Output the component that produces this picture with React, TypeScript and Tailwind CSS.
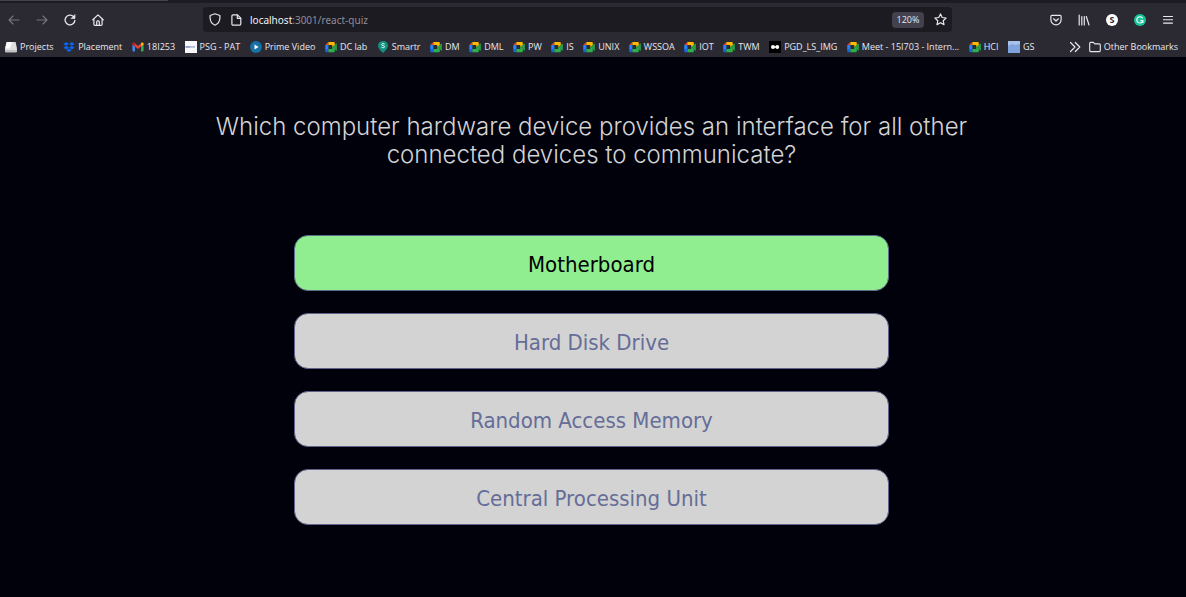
import React, { useState } from "react";

type IconProps = { className?: string };

const stroke = {
  fill: "none",
  stroke: "currentColor",
  strokeLinecap: "round" as const,
  strokeLinejoin: "round" as const,
};

function BackIcon() {
  return (
    <svg viewBox="0 0 12 12" className="h-3 w-3" {...stroke} strokeWidth="1.1">
      <path d="M11 6H1M5 2L1 6l4 4" />
    </svg>
  );
}

function ForwardIcon() {
  return (
    <svg viewBox="0 0 12 12" className="h-3 w-3" {...stroke} strokeWidth="1.1">
      <path d="M1 6h10M7 2l4 4-4 4" />
    </svg>
  );
}

function ReloadIcon() {
  return (
    <svg viewBox="0 0 12 12" className="h-3 w-3" {...stroke} strokeWidth="1.3">
      <path d="M9.6 2.6A4.9 4.9 0 1 0 10.9 6.4" />
      <path d="M11 0.8v3.7H7.3z" fill="currentColor" strokeWidth="0.6" />
    </svg>
  );
}

function HomeIcon() {
  return (
    <svg viewBox="0 0 12 12" className="h-3 w-3" {...stroke} strokeWidth="1.2">
      <path d="M0.8 5.8L6 0.9l5.2 4.9M1.9 5v5.2c0 .7.4 1.1 1.1 1.1h6c.7 0 1.1-.4 1.1-1.1V5" />
      <path d="M4.7 11V7.9c0-.6.4-1 1-1h.6c.6 0 1 .4 1 1V11" />
    </svg>
  );
}

function ShieldIcon() {
  return (
    <svg viewBox="0 0 12 13" className="h-[13px] w-3" {...stroke} strokeWidth="1.2">
      <path d="M6 0.8l4.9 1.7v2.3c0 3.2-1.7 6-4.9 7.4C2.8 10.8 1.1 8 1.1 4.8V2.5z" />
    </svg>
  );
}

function PageIcon() {
  return (
    <svg viewBox="0 0 11 12" className="h-3 w-[11px]" {...stroke} strokeWidth="1.2">
      <path d="M2 .8h4.500l3.300 3.300v6c0 .6-.5 1.100-1.100 1.100H2c-.6 0-1.100-.5-1.100-1.100V1.900C.9 1.300 1.400.8 2 .8z" />
      <path d="M6.300 1v3.300h3.300" />
    </svg>
  );
}

function StarIcon() {
  return (
    <svg viewBox="0 0 13 13" className="h-[13px] w-[13px]" {...stroke} strokeWidth="1.2">
      <path d="M6.500 .9l1.700 3.600 3.900.5-2.900 2.700.8 3.900-3.500-1.900L3 11.600l.8-3.900L.9 5l3.900-.5z" />
    </svg>
  );
}

function PocketIcon() {
  return (
    <svg viewBox="0 0 12 12" className="h-3 w-3" {...stroke} strokeWidth="1.2">
      <path d="M1.900 1.300h8.200c.6 0 1 .4 1 1v3.400a5.100 5.100 0 0 1-10.200 0V2.300c0-.6.4-1 1-1z" />
      <path d="M3.600 4.800L6 7l2.400-2.200" />
    </svg>
  );
}

function LibraryIcon() {
  return (
    <svg viewBox="0 0 12 12" className="h-3 w-3" {...stroke} strokeWidth="1.2">
      <path d="M1.200 1v10M3.800 2.500V11M6.300 2.500V11M8.300 2.500l2.700 8.500" />
    </svg>
  );
}

function MenuIcon() {
  return (
    <svg viewBox="0 0 12 12" className="h-3 w-3" {...stroke} strokeWidth="1.1">
      <path d="M1.500 2.500h9M1.500 5.800h9M1.500 9.100h9" />
    </svg>
  );
}

function OverflowIcon() {
  return (
    <svg viewBox="0 0 12 12" className="h-3 w-3" {...stroke} strokeWidth="1.2">
      <path d="M1.500 1.500L6 6l-4.500 4.500M6.300 1.500L10.800 6l-4.500 4.500" />
    </svg>
  );
}

function OutlineFolderIcon() {
  return (
    <svg viewBox="0 0 12 12" className="h-3 w-3 shrink-0" {...stroke} strokeWidth="1.1">
      <path d="M.7 9.600V2.400c0-.6.4-1 1-1h2.700l1.400 1.500h4.500c.6 0 1 .4 1 1v5.700c0 .6-.4 1-1 1H1.700c-.6 0-1-.4-1-1z" />
    </svg>
  );
}

function DriveIcon({ className }: IconProps) {
  return (
    <svg viewBox="0 0 12 12" className={className}>
      <path d="M1.600 1h9L11.900 7v3.500a.8.8 0 0 1-.8.8H.9a.8.8 0 0 1-.8-.8V7z" fill="#dedede" />
      <path d="M1.800 1h5.500L5 7.500H.2z" fill="#fafafa" />
      <path d="M.1 9h11.800v1.500a.8.8 0 0 1-.8.8H.9a.8.8 0 0 1-.8-.8z" fill="#c2c2c2" />
    </svg>
  );
}

function DropboxIcon({ className }: IconProps) {
  return (
    <svg viewBox="0 0 12 12" className={className} fill="#0a66f0">
      <path d="M3.200 1L6 2.900 3.200 4.800.4 2.900zM8.800 1l2.800 1.900-2.800 1.900L6 2.900zM3.200 4.800L6 6.700 3.200 8.600.4 6.700zM8.800 4.800l2.800 1.900-2.800 1.900L6 6.700zM6 7.500l2.700 1.800L6 11.100 3.300 9.300z" />
    </svg>
  );
}

function GmailIcon({ className }: IconProps) {
  return (
    <svg viewBox="0 0 12 12" className={className}>
      <path d="M.4 3.500l2.600 2v4.900H1.200a.8.8 0 0 1-.8-.8z" fill="#4285f4" />
      <path d="M11.600 3.500L9 5.500v4.900h1.800a.8.8 0 0 0 .8-.8z" fill="#34a853" />
      <path d="M3 2.600l3 2.300 3-2.300v3L6 7.900 3 5.600z" fill="#ea4335" />
      <path d="M.4 3.700V2.800c0-1.100 1.200-1.700 2.100-1.100l.5.400v3.500z" fill="#c5221f" />
      <path d="M11.600 3.700V2.800c0-1.100-1.200-1.700-2.100-1.100l-.5.400v3.500z" fill="#fbbc04" />
    </svg>
  );
}

function PsgIcon({ className }: IconProps) {
  return (
    <svg viewBox="0 0 12 12" className={className}>
      <path d="M0 0h12v12H0z" fill="#f7f8fb" />
      <path d="M0 5h10v1.800H0z" fill="#b4bedb" />
      <path d="M1 5.600h4v.8H1z" fill="#6f80b3" />
    </svg>
  );
}

function PrimeIcon({ className }: IconProps) {
  return (
    <svg viewBox="0 0 12 12" className={className}>
      <circle cx="6" cy="6" r="5.900" fill="#1671a8" />
      <path d="M4.500 3.500L8.600 6 4.500 8.500z" fill="#fff" />
    </svg>
  );
}

function MeetIcon({ className }: IconProps) {
  return (
    <svg viewBox="0 0 12 12" className={className}>
      <path d="M3.400.9L.2 4.100h3.200z" fill="#ea4335" />
      <path d="M.2 4.100h3.200v4H.2z" fill="#2684fc" />
      <path d="M.2 8.100h3.200v3.200H1.200a1 1 0 0 1-1-1z" fill="#1a63dc" />
      <path d="M3.400.9h5.300c.7 0 1.100.5 1.100 1.100v3.200L7.200 6V4.100H3.400z" fill="#ffba00" />
      <path d="M3.400 8.100h3.800V6l2.600 1.100v3.100c0 .6-.4 1.100-1.100 1.100H3.400z" fill="#2fae4c" />
      <path d="M7.200 6l3.800-3.300c.4-.3.900 0 .9.400v6.100c0 .5-.5.700-.9.400z" fill="#2a9c45" />
    </svg>
  );
}

function SmartrIcon({ className }: IconProps) {
  return (
    <svg viewBox="0 0 12 12" className={className}>
      <path d="M6 .1c3 0 5 2 5 4.600C11 7.500 8.500 9.500 6 12 3.500 9.500 1 7.500 1 4.700 1 2.100 3 .1 6 .1z" fill="#11917e" />
      <path
        d="M7.600 3.200C7 2.400 4.600 2.300 4.600 3.600c0 1.200 3 .8 3 2.100 0 1.300-2.400 1.300-3.200.4"
        fill="none"
        stroke="#e8fffb"
        strokeWidth="1"
      />
    </svg>
  );
}

function DotsIcon({ className }: IconProps) {
  return (
    <svg viewBox="0 0 12 12" className={className}>
      <path d="M0 0h12v12H0z" fill="#000" />
      <circle cx="4" cy="6" r="2" fill="#fff" />
      <circle cx="8.300" cy="6" r="1.900" fill="#fff" />
      <path d="M4 5.300h4v1.400H4z" fill="#fff" />
    </svg>
  );
}

function GsIcon({ className }: IconProps) {
  return (
    <svg viewBox="0 0 12 12" className={className}>
      <path d="M0 0h12v12H0z" fill="#7fa3dc" />
      <path d="M0 0h12v3L7 4 4 3 0 5z" fill="#a5c1ec" />
    </svg>
  );
}

const bookmarks: { label: string; icon: (p: IconProps) => React.ReactElement }[] = [
  { label: "Projects", icon: DriveIcon },
  { label: "Placement", icon: DropboxIcon },
  { label: "18I253", icon: GmailIcon },
  { label: "PSG - PAT", icon: PsgIcon },
  { label: "Prime Video", icon: PrimeIcon },
  { label: "DC lab", icon: MeetIcon },
  { label: "Smartr", icon: SmartrIcon },
  { label: "DM", icon: MeetIcon },
  { label: "DML", icon: MeetIcon },
  { label: "PW", icon: MeetIcon },
  { label: "IS", icon: MeetIcon },
  { label: "UNIX", icon: MeetIcon },
  { label: "WSSOA", icon: MeetIcon },
  { label: "IOT", icon: MeetIcon },
  { label: "TWM", icon: MeetIcon },
  { label: "PGD_LS_IMG", icon: DotsIcon },
  { label: "Meet - 15I703 - Intern...", icon: MeetIcon },
  { label: "HCI", icon: MeetIcon },
  { label: "GS", icon: GsIcon },
];

const answers = ["Motherboard", "Hard Disk Drive", "Random Access Memory", "Central Processing Unit"];

function AddressBar() {
  const [url, setUrl] = useState("localhost:3001/react-quiz");
  return (
    <div className="flex h-[25px] min-w-0 flex-1 items-center rounded-sm bg-[#1c1b22] pr-[5px] pl-1.5 text-[#e8e7ee]">
      <ShieldIcon />
      <span className="ml-2.5">
        <PageIcon />
      </span>
      <div className="ml-2 grid min-w-0 flex-1 items-center font-['Noto_Sans',sans-serif] text-[10px] leading-4">
        <span aria-hidden="true" className="col-start-1 row-start-1 truncate text-[#8f8e98]">
          <span className="text-[#f3f2f8]">localhost</span>:3001/react-quiz
        </span>
        <input
          aria-label="Address"
          value={url}
          onChange={(e) => setUrl(e.target.value)}
          className="col-start-1 row-start-1 w-full min-w-0 bg-transparent text-transparent outline-none"
        />
      </div>
      <button className="flex h-4 w-8 items-center justify-center rounded-sm bg-[#42414d] text-[9px] leading-3">
        120%
      </button>
      <button aria-label="Bookmark this page" className="ml-[10px]">
        <StarIcon />
      </button>
    </div>
  );
}

function Browser() {
  return (
    <header className="bg-[#2b2a33] font-['Open_Sans','Noto_Sans',sans-serif] text-[#e8e7ee]">
      <div className="flex h-[3px] bg-[#1c1b22]">
        <div className="h-px w-[168px] bg-[#42414d]" />
      </div>
      <div className="flex h-[33px] items-center pr-3 pl-2">
        <nav aria-label="Navigation" className="flex w-[195px] shrink-0 items-center gap-4">
          <button aria-label="Back" className="text-[#77767f]">
            <BackIcon />
          </button>
          <button aria-label="Forward" className="text-[#77767f]">
            <ForwardIcon />
          </button>
          <button aria-label="Reload">
            <ReloadIcon />
          </button>
          <button aria-label="Home">
            <HomeIcon />
          </button>
        </nav>
        <AddressBar />
        <div className="ml-[98px] flex shrink-0 items-center gap-4">
          <button aria-label="Pocket">
            <PocketIcon />
          </button>
          <button aria-label="Library">
            <LibraryIcon />
          </button>
          <button
            aria-label="Account"
            className="flex h-3 w-3 items-center justify-center rounded-full bg-white text-[9px] leading-3 font-bold text-[#2b2a33]"
          >
            S
          </button>
          <button
            aria-label="Grammar checker"
            className="flex h-3 w-3 items-center justify-center rounded-full bg-[#15c39a] text-white"
          >
            <svg viewBox="0 0 12 12" className="h-3 w-3" {...stroke} strokeWidth="1.1">
              <path d="M8.300 3.900A3.100 3.100 0 1 0 8.900 6.600H6.800M8.900 6.600V8.500" />
            </svg>
          </button>
          <button aria-label="Menu">
            <MenuIcon />
          </button>
        </div>
      </div>
      <div className="flex h-[21px] items-center pr-2 pl-[5px] text-[9px] leading-4">
        <nav aria-label="Bookmarks" className="flex min-w-0 flex-1 items-center justify-between">
          {bookmarks.map(({ label, icon: Icon }) => (
            <a key={label} href="#" className="flex items-center gap-[3px] whitespace-nowrap">
              <Icon className="h-3 w-3 shrink-0" />
              {label}
            </a>
          ))}
        </nav>
        <button aria-label="More bookmarks" className="mr-2 ml-[34px]">
          <OverflowIcon />
        </button>
        <button className="flex items-center gap-[3px] whitespace-nowrap">
          <OutlineFolderIcon />
          Other Bookmarks
        </button>
      </div>
    </header>
  );
}

export default function App() {
  return (
    <div className="flex min-h-screen flex-col bg-[#00010b]">
      <Browser />
      <main className="flex flex-1 flex-col items-center pt-14 pr-[3px] pb-10">
        <h1 className="max-w-[800px] text-center font-['Inter',sans-serif] text-[24px] leading-7 font-[350] text-[#d3d3d3]">
          Which computer hardware device provides an interface for all other connected devices to communicate?
        </h1>
        <div className="mt-[66px] flex w-full max-w-[595px] flex-col gap-[22px] font-['DejaVu_Sans_Condensed','DejaVu_Sans',sans-serif] text-[22px] leading-7">
          {answers.map((answer, i) => (
            <button
              key={answer}
              className={
                i === 0
                  ? "h-14 rounded-[14px] border border-[#5f6d8c] bg-[#90ee90] pt-[3px] text-black"
                  : "h-14 rounded-[14px] border border-[#5f638c] bg-[#d3d3d3] pt-[3px] text-[#656d98]"
              }
            >
              {answer}
            </button>
          ))}
        </div>
      </main>
    </div>
  );
}
